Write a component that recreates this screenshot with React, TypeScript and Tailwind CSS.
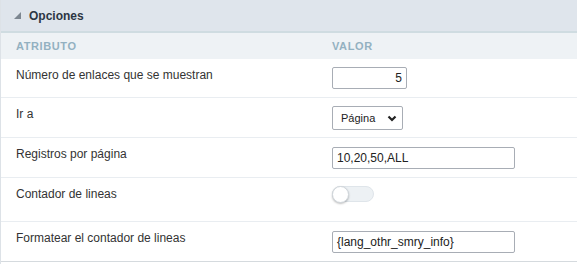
import { useState } from "react";

function Row({ label, h, last, children }: { label: string; h: string; last?: boolean; children: React.ReactNode }) {
  return (
    <div className={`flex items-start pt-2 ${h} ${last ? "border-b border-[#d5dade]" : "border-b border-[#e9edf1]"}`}>
      <div className="w-[331px] shrink-0 pl-[15px] text-[12px] leading-[14px] text-[#333] pt-[1px]">{label}</div>
      <div className="flex-1">{children}</div>
    </div>
  );
}

function App() {
  const [on, setOn] = useState(false);
  return (
    <div className="w-[577px] h-[264px] bg-white border-l border-[#dde2e7] font-['Liberation_Sans',Arial,sans-serif]">
      <div className="h-[33px] bg-[#dfe5ec] border-b-2 border-[#cfdce1] flex items-center pl-[12px] gap-[7px]">
        <svg width="9" height="9" viewBox="0 0 9 9">
          <polygon points="8,1 8,8 1,8" fill="#7d8791" />
        </svg>
        <span className="text-[12px] font-bold text-[#2c3643]">Opciones</span>
      </div>
      <div className="h-[26px] bg-[#eef2f5] flex items-center text-[11px] font-bold tracking-[0.6px] text-[#93b1c1]">
        <div className="w-[331px] pl-[15px]">ATRIBUTO</div>
        <div>VALOR</div>
      </div>
      <Row label="Número de enlaces que se muestran" h="h-[39px]">
        <div className="w-[75px] h-[22px] border border-[#a8adb5] rounded-[2px] flex items-center justify-end pr-[4px] text-[12px] text-[#222]">5</div>
      </Row>
      <Row label="Ir a" h="h-[40px]">
        <div className="w-[71px] h-[24px] border border-[#a8adb5] rounded-[2px] flex items-center justify-between pl-[8px] pr-[5px] text-[11px] font-medium text-[#222]">
          <span>Página</span>
          <svg width="10" height="7" viewBox="0 0 10 7">
            <path d="M1.5 1.5 L5 5 L8.5 1.5" stroke="#222" strokeWidth="2.2" fill="none" />
          </svg>
        </div>
      </Row>
      <Row label="Registros por página" h="h-[40px]">
        <div className="w-[183px] h-[22px] border border-[#a8adb5] rounded-[2px] flex items-center pl-[4px] mt-[1px] text-[12px] text-[#222]">10,20,50,ALL</div>
      </Row>
      <Row label="Contador de lineas" h="h-[44px]">
        <button
          onClick={() => setOn(!on)}
          className={`relative w-[42px] h-[16px] rounded-full border border-[#dfe5ea] block ${on ? "bg-[#8fb0c0]" : "bg-[#edf1f4]"}`}
        >
          <span
            className={`absolute top-[-1px] w-[17px] h-[17px] rounded-full bg-white border border-[#d0d6db] shadow-[0_1px_2px_rgba(0,0,0,0.25)] ${on ? "left-[24px]" : "left-[-1px]"}`}
          />
        </button>
      </Row>
      <Row label="Formatear el contador de lineas" h="h-[40px]" last>
        <div className="w-[183px] h-[22px] border border-[#a8adb5] rounded-[2px] flex items-center pl-[4px] mt-[1px] text-[12px] text-[#222]">{"{lang_othr_smry_info}"}</div>
      </Row>
    </div>
  );
}

export default App;
